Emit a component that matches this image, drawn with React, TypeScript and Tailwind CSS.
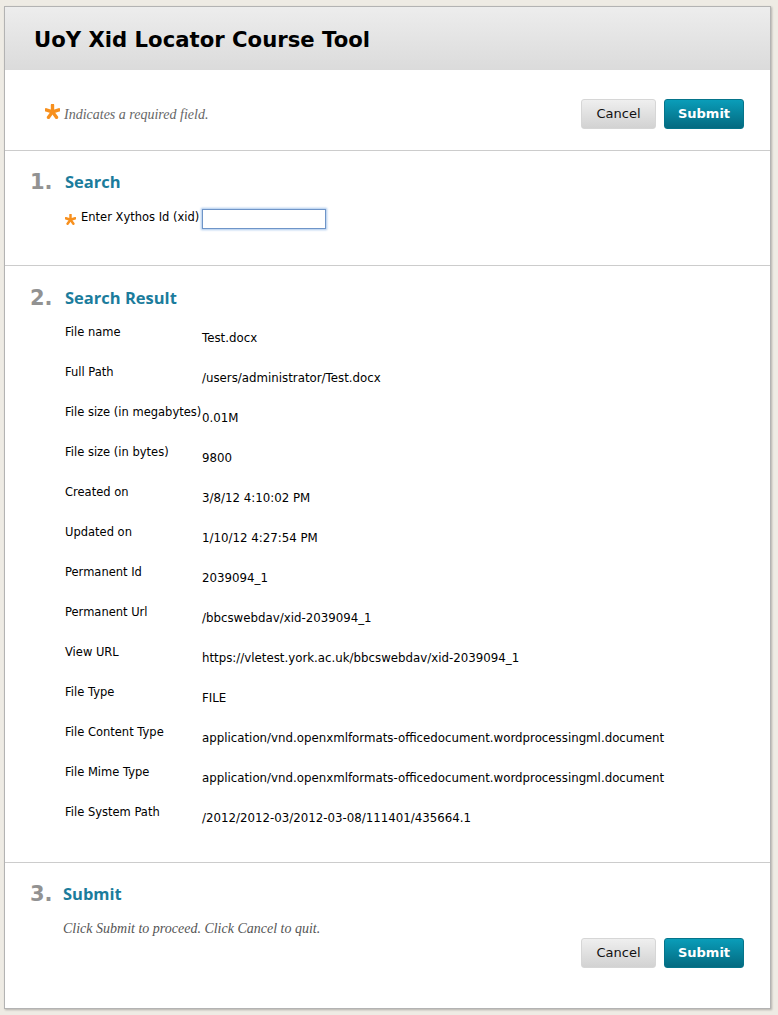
import React from "react";

const Star = ({ size }: { size: number }) => (
  <svg width={size} height={size} viewBox="0 0 20 20" className="shrink-0">
    {[0, 72, 144, 216, 288].map((a) => (
      <line
        key={a}
        x1="10"
        y1="10.5"
        x2="10"
        y2="1.5"
        stroke="#f7901e"
        strokeWidth="4.5"
        strokeLinecap="round"
        transform={`rotate(${a} 10 10.5)`}
      />
    ))}
  </svg>
);

const rows: [string, string][] = [
  ["File name", "Test.docx"],
  ["Full Path", "/users/administrator/Test.docx"],
  ["File size (in megabytes)", "0.01M"],
  ["File size (in bytes)", "9800"],
  ["Created on", "3/8/12 4:10:02 PM"],
  ["Updated on", "1/10/12 4:27:54 PM"],
  ["Permanent Id", "2039094_1"],
  ["Permanent Url", "/bbcswebdav/xid-2039094_1"],
  ["View URL", "https://vletest.york.ac.uk/bbcswebdav/xid-2039094_1"],
  ["File Type", "FILE"],
  ["File Content Type", "application/vnd.openxmlformats-officedocument.wordprocessingml.document"],
  ["File Mime Type", "application/vnd.openxmlformats-officedocument.wordprocessingml.document"],
  ["File System Path", "/2012/2012-03/2012-03-08/111401/435664.1"],
];

const Buttons = () => (
  <div className="flex gap-[8px]">
    <button className="w-[75px] h-[30px] rounded-[3px] border border-[#d6d6d6] bg-gradient-to-b from-[#efefef] to-[#d2d2d2] text-[13px] text-[#111] font-['DejaVu_Sans',sans-serif]">
      Cancel
    </button>
    <button className="w-[80px] h-[30px] rounded-[3px] border border-[#05748a] bg-gradient-to-b from-[#0a9db9] to-[#046a80] text-[13px] font-bold text-white font-['DejaVu_Sans',sans-serif]">
      Submit
    </button>
  </div>
);

const Heading = ({ n, title, gap }: { n: string; title: string; gap: string }) => (
  <div className="flex items-center h-[26px]">
    <span className={`${gap} text-[21px] font-bold text-[#929292] leading-none`}>{n}</span>
    <span className="text-[16.5px] font-bold text-[#1b7c9c] leading-none font-['Open_Sans',sans-serif]">{title}</span>
  </div>
);

export default function App() {
  return (
    <div className="min-h-[1015px] bg-[#eeebe4] pt-[6px] pl-[4px] font-['DejaVu_Sans',sans-serif] text-black">
      <div className="w-[767px] border border-[#b3b3b3] bg-white shadow-[1px_1px_2px_rgba(0,0,0,0.25)]">
        <div className="h-[63px] bg-gradient-to-b from-[#ededed] to-[#dbdbdb] flex items-center pl-[29px] pt-[2px]">
          <h1 className="text-[21.2px] font-bold text-black">UoY Xid Locator Course Tool</h1>
        </div>

        <div className="flex items-center justify-between pt-[29px] pb-[21px] pl-[40px] pr-[26px] border-b border-[#cccccc]">
          <div className="flex items-center">
            <div className="-mt-[6px]">
              <Star size={15} />
            </div>
            <span className="ml-[4px] font-['Liberation_Serif',serif] italic text-[14px] text-[#666]">
              Indicates a required field.
            </span>
          </div>
          <Buttons />
        </div>

        <div className="pt-[18px] pb-[36px] pl-[25px] border-b border-[#cccccc]">
          <Heading n="1." title="Search" gap="w-[35px]" />
          <div className="flex items-center mt-[14px] pl-[35px]">
            <Star size={11} />
            <span className="ml-[5px] text-[11.5px] -mt-[3px]">Enter Xythos Id (xid)</span>
            <input className="ml-[3px] w-[124px] h-[20px] border border-[#6f95c8] shadow-[0_0_2px_1px_#a9c7ec] outline-none" />
          </div>
        </div>

        <div className="pt-[19px] pb-[18px] pl-[25px] border-b border-[#cccccc]">
          <Heading n="2." title="Search Result" gap="w-[35px]" />
          <div className="mt-[13px] pl-[35px]">
            {rows.map(([k, v]) => (
              <div key={k} className="flex h-[40px] leading-[16px]">
                <div className="w-[137px] shrink-0 whitespace-nowrap text-[11.5px]">{k}</div>
                <div className="mt-[6px] whitespace-nowrap text-[11.8px]">{v}</div>
              </div>
            ))}
          </div>
        </div>

        <div className="pt-[18px] pb-[40px] pl-[25px] pr-[26px]">
          <Heading n="3." title="Submit" gap="w-[33px]" />
          <div className="mt-[13px] pl-[33px] h-[18px] font-['Liberation_Serif',serif] italic text-[14px] text-[#555] leading-[18px]">
            Click Submit to proceed. Click Cancel to quit.
          </div>
          <div className="flex justify-end">
            <Buttons />
          </div>
        </div>
      </div>
    </div>
  );
}
